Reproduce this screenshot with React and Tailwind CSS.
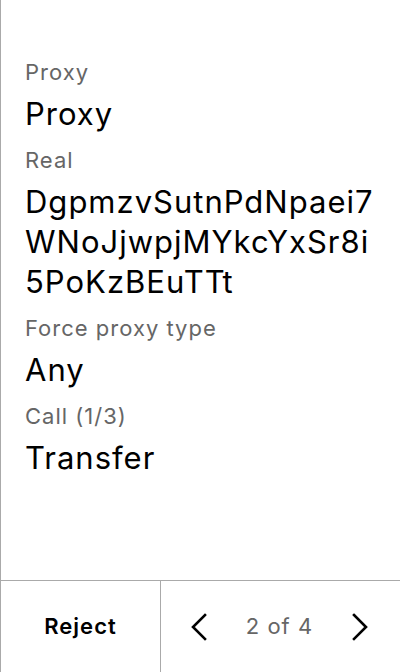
export default function App() {
  const fields = [
    { label: 'Proxy', value: 'Proxy' },
    { label: 'Real', value: 'DgpmzvSutnPdNpaei7WNoJjwpjMYkcYxSr8i5PoKzBEuTTt' },
    { label: 'Force proxy type', value: 'Any' },
    { label: 'Call (1/3)', value: 'Transfer' },
  ];

  return (
    <div className="h-[672px] w-[400px] bg-white border-l border-[#aaaaaa] flex flex-col font-['Inter',sans-serif] tracking-[1px]">
      {/* Details */}
      <div className="flex-1 pt-[58px] pl-[24px] pr-[21px] flex flex-col gap-[12px]">
        {fields.map((f) => (
          <div key={f.label} className="flex flex-col">
            <span className="text-[22px] leading-[28px] text-[#666666]">{f.label}</span>
            <span className="mt-[8px] text-[31px] leading-[40px] text-black break-all">{f.value}</span>
          </div>
        ))}
      </div>

      {/* Footer */}
      <div className="h-[92px] border-t border-[#aaaaaa] flex">
        <button className="w-[160px] border-r border-[#aaaaaa] flex items-center justify-center text-[22px] font-semibold text-black tracking-[1px]">
          Reject
        </button>
        <div className="flex-1 flex items-center justify-between pl-[29px] pr-[31px]">
          <svg width="18" height="28" viewBox="0 0 18 28" fill="none" stroke="black" strokeWidth="2.6" strokeLinecap="square">
            <path d="M15 2 L3 14 L15 26" />
          </svg>
          <span className="text-[22px] text-[#666666]">2 of 4</span>
          <svg width="18" height="28" viewBox="0 0 18 28" fill="none" stroke="black" strokeWidth="2.6" strokeLinecap="square">
            <path d="M3 2 L15 14 L3 26" />
          </svg>
        </div>
      </div>
    </div>
  );
}
